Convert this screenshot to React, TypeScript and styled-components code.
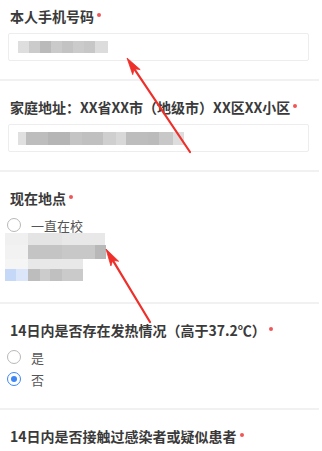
import React from "react";
import styled, { createGlobalStyle } from "styled-components";

const GlobalStyle = createGlobalStyle`
  html, body {
    margin: 0;
    padding: 0;
    background: #ffffff;
  }
  body {
    font-family: "Noto Sans CJK SC", "Noto Sans", sans-serif;
    -webkit-font-smoothing: antialiased;
  }
`;

type Cell = [number, string];

const phoneCells: Cell[] = [
  [11, "#dedede"], [11, "#cbcbcb"], [11, "#bababa"], [11, "#cacaca"],
  [11, "#c3c3c3"], [11, "#cbcbcb"], [11, "#c7c7c7"], [13, "#dcdcdc"]
];

const addressCells: Cell[] = [
  [8, "#e0e0e0"], [22, "#bdbdbd"], [22, "#b5b5b5"], [12, "#c4c4c4"],
  [21, "#c0c0c0"], [13, "#cfcfcf"], [10, "#d8d8d8"], [22, "#bdbdbd"],
  [11, "#bbbbbb"], [14, "#c8c8c8"], [11, "#dddddd"]
];

const locationRows: { h: number; cells: Cell[] }[] = [
  { h: 12, cells: [[23, "#f0f0f0"], [34, "#e4e4e4"], [43, "#e8e8e8"]] },
  { h: 14, cells: [[23, "#f2f2f2"], [34, "#c4c4c4"], [33, "#c8c8c8"], [11, "#b8b8b8"]] },
  { h: 10, cells: [[23, "#f5f5f5"], [55, "#e8e8e8"]] },
  {
    h: 12,
    cells: [
      [11, "#c6d8f8"], [12, "#dbe6fa"], [12, "#bdbdbd"], [10, "#cccccc"],
      [12, "#c0c0c0"], [21, "#cacaca"]
    ]
  }
];

const styles = {
  Page: styled.div`
    position: relative;
    width: 322px;
    height: 451px;
    overflow: hidden;
    background: #ffffff;
  `,
  Section: styled.div`
    width: 299px;
    padding: 16px 10px 18px;
    border-bottom: 2px solid #f1f1f1;

    &:first-child {
      padding-top: 6px;
    }
  `,
  Title: styled.div`
    font-size: 14px;
    line-height: 20px;
    font-weight: 700;
    color: #3a3a3a;
    white-space: nowrap;
  `,
  Required: styled.span`
    display: inline-block;
    width: 4px;
    height: 4px;
    margin-left: 3px;
    border-radius: 50%;
    background: #f25555;
    vertical-align: 5px;
  `,
  InputBox: styled.div`
    box-sizing: border-box;
    width: 301px;
    height: 28px;
    margin: 7px 0 0 -2px;
    padding-left: 9px;
    border: 1px solid #ededed;
    border-radius: 2px;
    display: flex;
    align-items: center;
  `,
  Mosaic: styled.div`
    display: flex;
    flex-direction: column;
    filter: blur(0.6px);
  `,
  MosaicRow: styled.div<{ $h: number }>`
    display: flex;
    height: ${p => p.$h}px;
  `,
  MosaicCell: styled.div<{ $w: number; $c: string }>`
    width: ${p => p.$w}px;
    height: 100%;
    background: ${p => p.$c};
  `,
  Options: styled.div`
    display: flex;
    flex-direction: column;
    margin: 6px 0 0 -3px;
  `,
  Option: styled.label`
    display: flex;
    align-items: center;
    height: 22px;
    font-size: 13px;
    color: #555555;
  `,
  Radio: styled.span<{ $checked?: boolean }>`
    box-sizing: border-box;
    width: 14px;
    height: 14px;
    margin-right: 10px;
    border-radius: 50%;
    border: 1px solid ${p => (p.$checked ? "#3d86f5" : "#b8b8b8")};
    display: flex;
    align-items: center;
    justify-content: center;

    &::after {
      content: "";
      width: 6px;
      height: 6px;
      border-radius: 50%;
      background: ${p => (p.$checked ? "#3d86f5" : "transparent")};
    }
  `,
  LocationBlur: styled.div`
    margin: -3px 0 0 -5px;
  `,
  LocationSection: styled.div`
    width: 299px;
    padding: 16px 10px 21px;
    border-bottom: 2px solid #f1f1f1;
  `,
  Annotations: styled.svg`
    position: absolute;
    left: 0;
    top: 0;
    pointer-events: none;
  `
};

const MosaicLine = ({ cells, h }: { cells: Cell[]; h: number }) => (
  <styles.MosaicRow $h={h}>
    {cells.map(([w, c], i) => (
      <styles.MosaicCell key={i} $w={w} $c={c} />
    ))}
  </styles.MosaicRow>
);

const Arrow = ({ tail, tip }: { tail: [number, number]; tip: [number, number] }) => {
  const dx = tip[0] - tail[0];
  const dy = tip[1] - tail[1];
  const len = Math.hypot(dx, dy);
  const ux = dx / len;
  const uy = dy / len;
  const head = 17;
  const half = 4.5;
  const bx = tip[0] - ux * head;
  const by = tip[1] - uy * head;
  const nx = -uy;
  const ny = ux;
  const neckX = tip[0] - ux * (head - 4);
  const neckY = tip[1] - uy * (head - 4);
  const pts = [
    `${tip[0]},${tip[1]}`,
    `${bx + nx * half},${by + ny * half}`,
    `${neckX},${neckY}`,
    `${bx - nx * half},${by - ny * half}`
  ].join(" ");
  return (
    <g fill="#ee2f2a" stroke="#ee2f2a">
      <line
        x1={tail[0]}
        y1={tail[1]}
        x2={neckX}
        y2={neckY}
        strokeWidth={2.2}
        strokeLinecap="round"
      />
      <polygon points={pts} strokeWidth={0.8} strokeLinejoin="round" />
    </g>
  );
};

export default function App() {
  return (
    <>
      <GlobalStyle />
      <styles.Page>
        <styles.Section>
          <styles.Title>
            本人手机号码
            <styles.Required />
          </styles.Title>
          <styles.InputBox>
            <styles.Mosaic>
              <MosaicLine h={12} cells={phoneCells} />
            </styles.Mosaic>
          </styles.InputBox>
        </styles.Section>

        <styles.Section>
          <styles.Title>
            家庭地址：XX省XX市（地级市）XX区XX小区
            <styles.Required />
          </styles.Title>
          <styles.InputBox>
            <styles.Mosaic>
              <MosaicLine h={13} cells={addressCells} />
            </styles.Mosaic>
          </styles.InputBox>
        </styles.Section>

        <styles.LocationSection>
          <styles.Title>
            现在地点
            <styles.Required />
          </styles.Title>
          <styles.Options>
            <styles.Option>
              <styles.Radio />
              一直在校
            </styles.Option>
          </styles.Options>
          <styles.LocationBlur>
            <styles.Mosaic>
              {locationRows.map((r, i) => (
                <MosaicLine key={i} h={r.h} cells={r.cells} />
              ))}
            </styles.Mosaic>
          </styles.LocationBlur>
        </styles.LocationSection>

        <styles.Section>
          <styles.Title>
            14日内是否存在发热情况（高于37.2℃）
            <styles.Required />
          </styles.Title>
          <styles.Options>
            <styles.Option>
              <styles.Radio />是
            </styles.Option>
            <styles.Option>
              <styles.Radio $checked />否
            </styles.Option>
          </styles.Options>
        </styles.Section>

        <styles.Section>
          <styles.Title>
            14日内是否接触过感染者或疑似患者
            <styles.Required />
          </styles.Title>
        </styles.Section>

        <styles.Annotations width={322} height={451} viewBox="0 0 322 451">
          <Arrow tail={[190, 152]} tip={[127, 58]} />
          <Arrow tail={[150, 322]} tip={[106, 249]} />
        </styles.Annotations>
      </styles.Page>
    </>
  );
}
